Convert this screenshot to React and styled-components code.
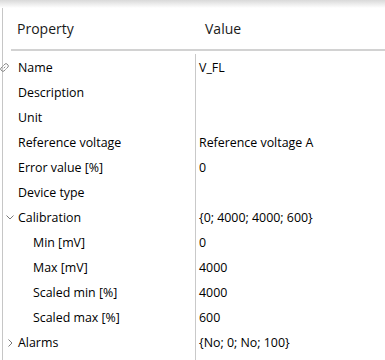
import React from 'react';
import styled, { createGlobalStyle } from 'styled-components';

const GlobalStyle = createGlobalStyle`
  html, body {
    margin: 0;
    padding: 0;
    background: #fff;
  }
  body {
    font-family: 'Open Sans', 'Noto Sans', sans-serif;
    color: #000;
  }
`;

const Page = styled.div`
  width: 385px;
  height: 360px;
  overflow: hidden;
  display: flex;
  flex-direction: column;
`;

const TopShade = styled.div`
  height: 8px;
  flex: none;
  background: linear-gradient(#d9d9d9, #ffffff);
`;

const Panel = styled.div`
  flex: 1;
  margin-left: 2px;
  border-left: 1px solid #c6c6c6;
  display: flex;
  flex-direction: column;
`;

const Header = styled.div`
  height: 41px;
  margin-left: 8px;
  border-bottom: 2px solid #d2d2d2;
  display: grid;
  grid-template-columns: 184px 1fr;
  align-items: center;
  font-size: 14px;
  color: #1a1a1a;
`;

const HeaderCell = styled.div`
  padding-left: ${(p) => p.$pad}px;
  padding-bottom: 1px;
`;

const Body = styled.div`
  margin-top: 4px;
  flex: 1;
  display: grid;
  grid-template-columns: 192px 1fr;
  grid-auto-rows: 25px;
  font-size: 12.4px;
  position: relative;

  &::after {
    content: '';
    position: absolute;
    left: 192px;
    top: -1px;
    bottom: 0;
    width: 1px;
    background: #c9c9c9;
  }
`;

const NameCell = styled.div`
  display: flex;
  align-items: center;
  white-space: nowrap;
  padding-left: ${(p) => (p.$child ? 15 : 0)}px;
`;

const Slot = styled.span`
  width: 18px;
  margin-left: -3px;
  height: 25px;
  display: flex;
  align-items: center;
  flex: none;
`;

const ValueCell = styled.div`
  display: flex;
  align-items: center;
  padding-left: 4px;
  white-space: nowrap;
`;

// broken chain link, drawn diagonally
const LinkIcon = () => (
  <svg width="9" height="9" viewBox="0 0 9 9" style={{ marginLeft: 0 }}>
    <g fill="none" stroke="#8c8c8c" strokeWidth="1" strokeLinecap="round">
      <path d="M3.6 2.4 L5 1 Q6 0.2 7 1 L8 2 Q8.8 3 8 4 L6.6 5.4" />
      <path d="M5.4 6.6 L4 8 Q3 8.8 2 8 L1 7 Q0.2 6 1 5 L2.4 3.6" />
      <path d="M4 5 L5 4" />
    </g>
  </svg>
);

const ChevronDown = () => (
  <svg width="8" height="5" viewBox="0 0 8 5" style={{ marginLeft: 6 }}>
    <path d="M0.5 0.5 L4 4 L7.5 0.5" fill="none" stroke="#7a7a7a" strokeWidth="1" />
  </svg>
);

const ChevronRight = () => (
  <svg width="5" height="8" viewBox="0 0 5 8" style={{ marginLeft: 8 }}>
    <path d="M0.5 0.5 L4 4 L0.5 7.5" fill="none" stroke="#7a7a7a" strokeWidth="1" />
  </svg>
);

const rows = [
  { name: 'Name', value: 'V_FL', icon: 'link' },
  { name: 'Description', value: '' },
  { name: 'Unit', value: '' },
  { name: 'Reference voltage', value: 'Reference voltage A' },
  { name: 'Error value [%]', value: '0' },
  { name: 'Device type', value: '' },
  { name: 'Calibration', value: '{0; 4000; 4000; 600}', icon: 'down' },
  { name: 'Min [mV]', value: '0', child: true },
  { name: 'Max [mV]', value: '4000', child: true },
  { name: 'Scaled min [%]', value: '4000', child: true },
  { name: 'Scaled max [%]', value: '600', child: true },
  { name: 'Alarms', value: '{No; 0; No; 100}', icon: 'right' },
];

function RowIcon({ kind }) {
  if (kind === 'link') return <LinkIcon />;
  if (kind === 'down') return <ChevronDown />;
  if (kind === 'right') return <ChevronRight />;
  return null;
}

export default function App() {
  return (
    <>
      <GlobalStyle />
      <Page>
        <TopShade />
        <Panel>
          <Header>
            <HeaderCell $pad={6}>Property</HeaderCell>
            <HeaderCell $pad={10}>Value</HeaderCell>
          </Header>
          <Body>
            {rows.map((r) => (
              <React.Fragment key={r.name}>
                <NameCell $child={r.child}>
                  <Slot>
                    <RowIcon kind={r.icon} />
                  </Slot>
                  {r.name}
                </NameCell>
                <ValueCell>{r.value}</ValueCell>
              </React.Fragment>
            ))}
          </Body>
        </Panel>
      </Page>
    </>
  );
}
